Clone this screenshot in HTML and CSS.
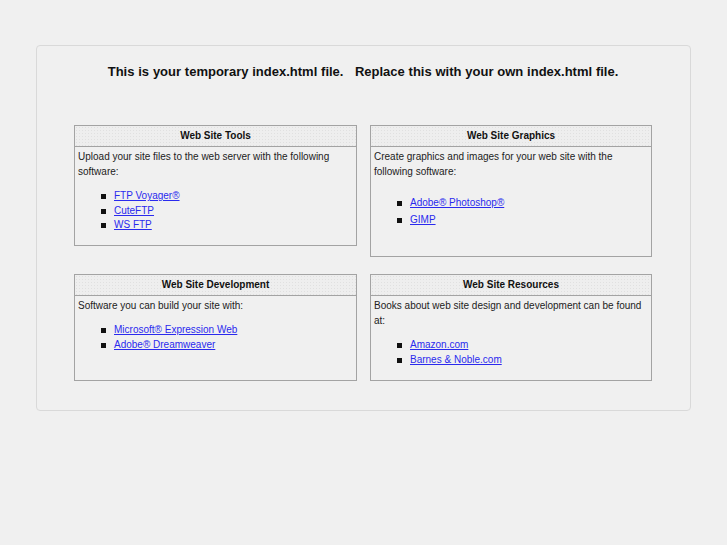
FILE: index.html
```html
<!DOCTYPE html>
<html>
<head>
<meta charset="utf-8">
<title>Temporary index</title>
<link rel="stylesheet" href="styles.css">
</head>
<body>
<div class="page">
  <h1 class="title">This is your temporary index.html file. &nbsp; Replace this with your own index.html file.</h1>
  <div class="grid">
    <div class="box box-tools">
      <div class="box-head">Web Site Tools</div>
      <div class="box-body">
        <p>Upload your site files to the web server with the following software:</p>
        <ul class="links">
          <li><a href="#">FTP Voyager®</a></li>
          <li><a href="#">CuteFTP</a></li>
          <li><a href="#">WS FTP</a></li>
        </ul>
      </div>
    </div>
    <div class="box box-graphics">
      <div class="box-head">Web Site Graphics</div>
      <div class="box-body">
        <p>Create graphics and images for your web site with the following software:</p>
        <ul class="links links-wide">
          <li><a href="#">Adobe® Photoshop®</a></li>
          <li><a href="#">GIMP</a></li>
        </ul>
      </div>
    </div>
    <div class="box box-row2">
      <div class="box-head">Web Site Development</div>
      <div class="box-body">
        <p>Software you can build your site with:</p>
        <ul class="links links-tight">
          <li><a href="#">Microsoft® Expression Web</a></li>
          <li><a href="#">Adobe® Dreamweaver</a></li>
        </ul>
      </div>
    </div>
    <div class="box box-row2">
      <div class="box-head">Web Site Resources</div>
      <div class="box-body">
        <p>Books about web site design and development can be found at:</p>
        <ul class="links links-tight">
          <li><a href="#">Amazon.com</a></li>
          <li><a href="#">Barnes &amp; Noble.com</a></li>
        </ul>
      </div>
    </div>
  </div>
</div>
</body>
</html>
```
FILE: styles.css
```css
html, body {
  margin: 0;
  padding: 0;
  background: #f0f0f0;
}
body {
  font-family: "Liberation Sans", Arial, sans-serif;
  color: #111;
}
.page {
  box-sizing: border-box;
  width: 655px;
  height: 366px;
  margin: 45px 0 0 36px;
  border: 1px solid #d9d9d9;
  border-radius: 4px;
  padding: 18px 38px 0 37px;
}
.title {
  margin: 0;
  font-size: 13px;
  line-height: 16px;
  font-weight: bold;
  text-align: center;
  color: #111;
  word-spacing: 0.2px;
}
.grid {
  margin-top: 45px;
  display: grid;
  grid-template-columns: 283px 282px;
  column-gap: 13px;
  row-gap: 17px;
  align-items: start;
}
.box {
  box-sizing: border-box;
  border: 1px solid #a3a3a3;
  background: #f0f0f0;
}
.box-tools { height: 121px; }
.box-graphics { height: 132px; }
.box-row2 { height: 107px; }
.box-head {
  height: 20px;
  line-height: 20px;
  text-align: center;
  font-size: 10px;
  font-weight: bold;
  color: #111;
  border-bottom: 1px solid #a3a3a3;
  background-color: #eeeeee;
  background-image: radial-gradient(circle, #e0e0e0 0.6px, transparent 0.9px);
  background-size: 3px 3px;
}
.box-body {
  padding: 2px 3px 0 3px;
  font-size: 10px;
  color: #222;
}
.box-body p {
  margin: 0;
  line-height: 15px;
}
.links {
  margin: 10px 0 0 0;
  padding: 0 0 0 36px;
  list-style: none;
}
.links li {
  position: relative;
  line-height: 14.5px;
}
.links li::before {
  content: "";
  position: absolute;
  left: -13px;
  top: 50%;
  width: 5px;
  height: 5px;
  margin-top: -2px;
  background: #111;
}
.links-wide { margin-top: 15px; }
.links-wide li { line-height: 17px; }
.links-tight { margin-top: 10px; }
.links a {
  color: #2a2aee;
  text-decoration: underline;
}
```
